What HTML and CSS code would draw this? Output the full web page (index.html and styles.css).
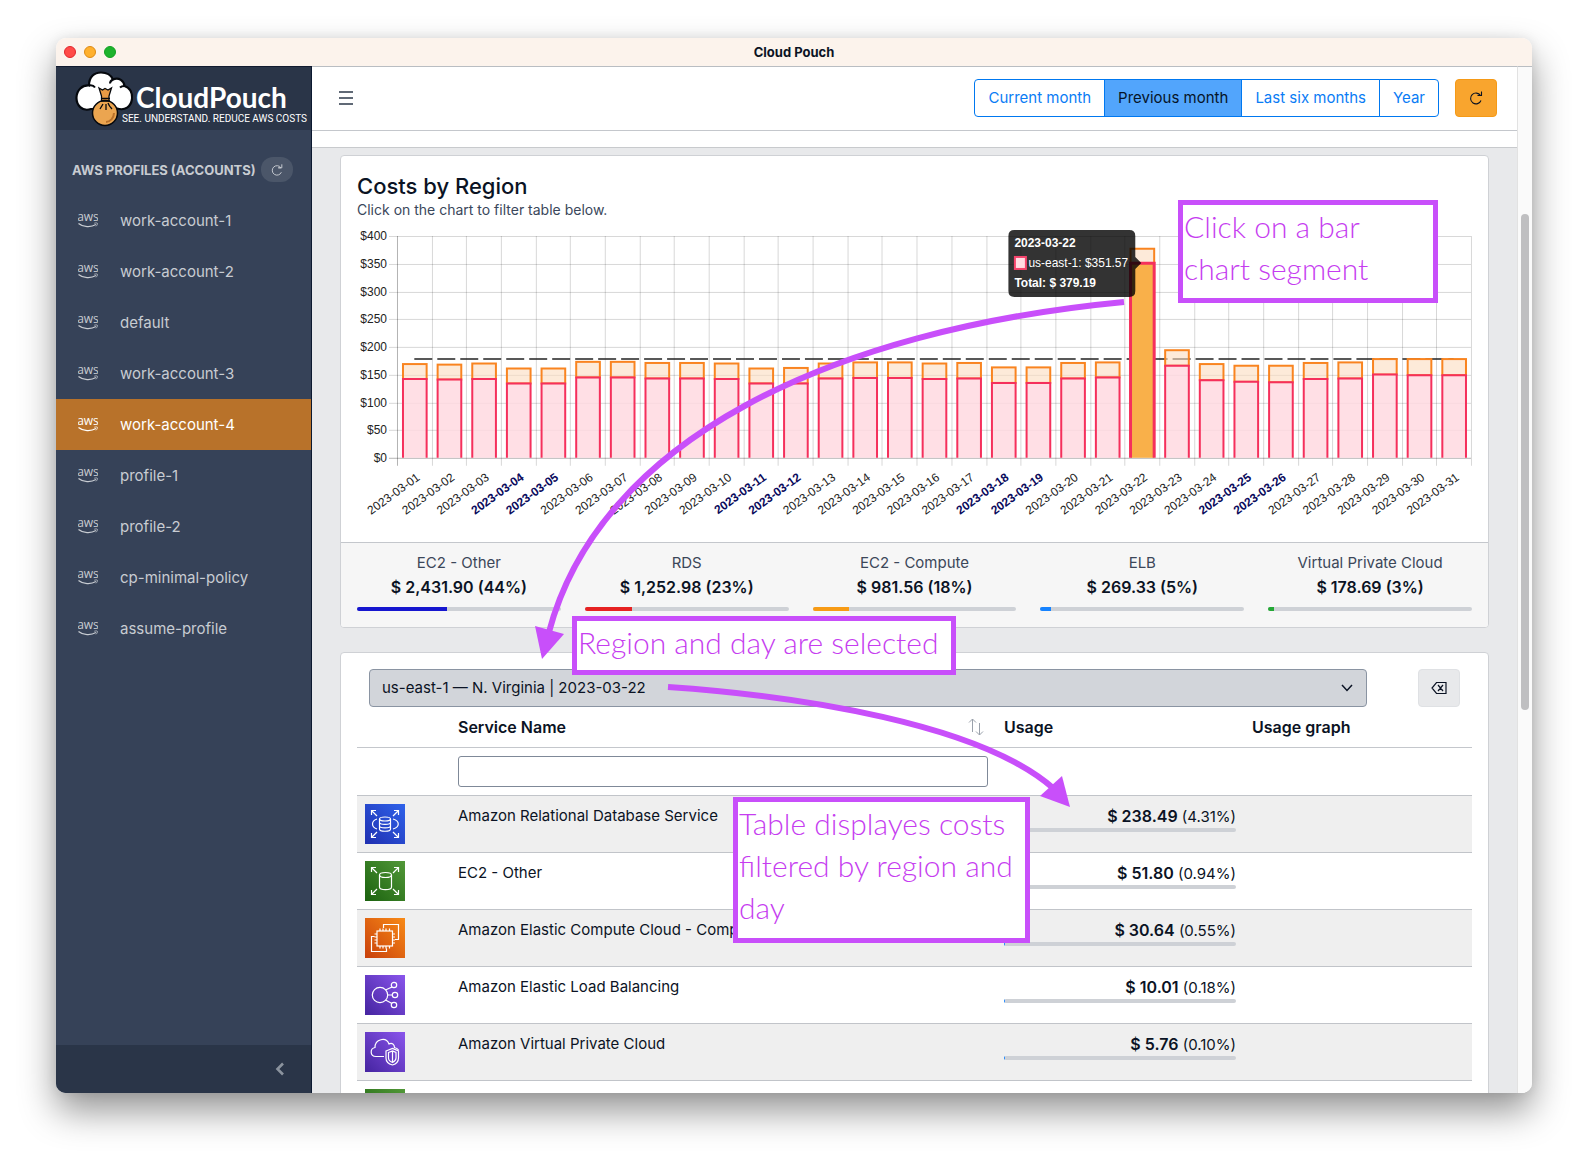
FILE: index.html
```html
<!DOCTYPE html>
<html lang="en">
<head>
<meta charset="utf-8">
<title>Cloud Pouch</title>
<meta name="viewport" content="width=device-width, initial-scale=1">
<link rel="stylesheet" href="styles.css">
</head>
<body>
<svg class="defs" aria-hidden="true">
  <defs>
    <symbol id="aws" viewBox="0 0 20 16">
      <text x="10" y="8" text-anchor="middle" class="aws-word">aws</text>
      <path d="M0.5 10.5C5 14.3 13 14.5 18 11.6" fill="none" stroke="currentColor" stroke-width="1.2"/>
      <path d="M16.3 10.2C18 9.8 19.2 9.8 19.4 10.3C19.6 11 19 12.400 18 13.300" fill="none" stroke="currentColor" stroke-width=".8"/>
    </symbol>
    <symbol id="reload" viewBox="0 0 16 16">
      <path d="M13 10.500A5.400 5.400 0 1 1 12.500 5.500H9.500M13.500 1.500V5.500H9.500" fill="none" stroke="currentColor" stroke-width="1.1"/>
    </symbol>
    <linearGradient id="blue" x1="0" y1="1" x2="1" y2="0"><stop offset="0" stop-color="#1f2fb0"/><stop offset="1" stop-color="#2f62ea"/></linearGradient>
    <linearGradient id="green" x1="0" y1="1" x2="1" y2="0"><stop offset="0" stop-color="#1b620f"/><stop offset="1" stop-color="#529838"/></linearGradient>
    <linearGradient id="orange" x1="0" y1="1" x2="1" y2="0"><stop offset="0" stop-color="#c8400c"/><stop offset="1" stop-color="#f88a16"/></linearGradient>
    <linearGradient id="purple" x1="0" y1="1" x2="1" y2="0"><stop offset="0" stop-color="#4524a0"/><stop offset="1" stop-color="#8a55ec"/></linearGradient>
    <symbol id="corners" viewBox="0 0 40 40">
      <path d="M6.500 11V6.500H11M6.500 6.500L12 12M29 6.500H33.500V11M33.500 6.500L28 12M6.500 29V33.500H11M6.500 33.500L12 28M29 33.500H33.500V29M33.500 33.500L28 28"/>
    </symbol>
  </defs>
</svg>
<div class="stage">
<div class="window">
  <header class="titlebar">
    <div class="lights"><span class="light red"></span><span class="light amber"></span><span class="light green"></span></div>
    <h1>Cloud Pouch</h1>
  </header>
  <div class="app">
    <aside class="sidebar">
      <div class="brand">
        <svg class="brand-mark" viewBox="0 0 58 56" aria-hidden="true">
          <path d="M16 38C7 41 1 34 1.500 26C2 19 7 14 14 14.500C14 6 19 1.500 26 1.500C32 1.500 36 4 38 8.500C44 6 49 10 49.500 15C55 17 57.500 22 57 28C56 36 50 40 42 37.500Z" fill="#fff" stroke="#05080d" stroke-width="2.200"/>
          <path d="M14 14.500C17 14 19 15 20 16.500M38 8.500C36 9.500 35 11 35 12.500M49.500 15C47.500 15 46 15.500 45 16.500" fill="none" stroke="#05080d" stroke-width="2"/>
          <path d="M24 17L27.500 19L30 17.500L33 19L36.500 17L34 25V31H26.500V25Z" fill="#e99b45" stroke="#05080d" stroke-width="1.300"/>
          <circle cx="30" cy="42" r="12.500" fill="#eba550" stroke="#05080d" stroke-width="1.500"/>
          <path d="M26 27.500H35M26 30H35M28 33L25 38M31 33V39M33 32C34 35 36 37 37 38" fill="none" stroke="#05080d" stroke-width="1.300"/>
          <path d="M39 42C39 47 35 51 31 51" fill="none" stroke="#b9712a" stroke-width="2"/>
        </svg>
        <div class="brand-text"><span class="brand-name">CloudPouch</span><span class="brand-tag">SEE. UNDERSTAND. REDUCE AWS COSTS</span></div>
      </div>
      <div class="nav-title"><h2>AWS PROFILES (ACCOUNTS)</h2><button class="pill" type="button" aria-label="Reload profiles"><svg><use href="#reload"/></svg></button></div>
      <nav class="nav">
        <a href="#"><svg><use href="#aws"/></svg>work-account-1</a>
        <a href="#"><svg><use href="#aws"/></svg>work-account-2</a>
        <a href="#"><svg><use href="#aws"/></svg>default</a>
        <a href="#"><svg><use href="#aws"/></svg>work-account-3</a>
        <a href="#" class="active"><svg><use href="#aws"/></svg>work-account-4</a>
        <a href="#"><svg><use href="#aws"/></svg>profile-1</a>
        <a href="#"><svg><use href="#aws"/></svg>profile-2</a>
        <a href="#"><svg><use href="#aws"/></svg>cp-minimal-policy</a>
        <a href="#"><svg><use href="#aws"/></svg>assume-profile</a>
      </nav>
      <button class="minimizer" type="button" aria-label="Collapse sidebar"><svg viewBox="0 0 10 14"><path d="M8 1.500L2.500 7L8 12.500" fill="none" stroke="currentColor" stroke-width="2.600"/></svg></button>
    </aside>
    <main class="main">
      <div class="topbar">
        <button class="toggler" type="button" aria-label="Toggle menu"><svg viewBox="0 0 14 14"><path d="M0 1H14M0 7H14M0 13H14" stroke="currentColor" stroke-width="1.300"/></svg></button>
        <div class="actions">
          <div class="group"><button type="button">Current month</button><button type="button" class="on">Previous month</button><button type="button">Last six months</button><button type="button">Year</button></div>
          <button class="refresh" type="button" aria-label="Refresh"><svg><use href="#reload"/></svg></button>
        </div>
      </div>
      <div class="subbar"></div>
      <div class="content">
        <section class="card">
          <div class="card-body chart-body">
            <h2 class="card-title">Costs by Region</h2>
            <p class="card-sub">Click on the chart to filter table below.</p>
            <svg class="chart" id="chart" viewBox="0 0 1116 300" role="img" aria-label="Daily costs by region"></svg>
          </div>
          <div class="summary">
            <div class="stat"><span>EC2 - Other</span><strong>$ 2,431.90 (44%)</strong><div class="bar"><i class="navy" style="width:44%"></i></div></div>
            <div class="stat"><span>RDS</span><strong>$ 1,252.98 (23%)</strong><div class="bar"><i class="crimson" style="width:23%"></i></div></div>
            <div class="stat"><span>EC2 - Compute</span><strong>$ 981.56 (18%)</strong><div class="bar"><i class="gold" style="width:18%"></i></div></div>
            <div class="stat"><span>ELB</span><strong>$ 269.33 (5%)</strong><div class="bar"><i class="azure" style="width:5%"></i></div></div>
            <div class="stat"><span>Virtual Private Cloud</span><strong>$ 178.69 (3%)</strong><div class="bar"><i class="leaf" style="width:3%"></i></div></div>
          </div>
        </section>
        <section class="card">
          <div class="card-body">
            <div class="filter">
              <div class="select"><select aria-label="Region and day"><option>us-east-1 — N. Virginia | 2023-03-22</option></select><svg viewBox="0 0 12 8"><path d="M1 1L6 6.500L11 1" fill="none" stroke="currentColor" stroke-width="1.500"/></svg></div>
              <button class="clear" type="button" aria-label="Clear filter"><svg viewBox="0 0 16 16"><path d="M5.500 2.500H15V13.500H5.500L1 8ZM7 5L12 11M12 5L7 11" fill="none" stroke="currentColor" stroke-width="1.200"/></svg></button>
            </div>
            <table>
              <colgroup><col class="c-icon"><col class="c-name"><col class="c-usage"><col class="c-graph"></colgroup>
              <thead>
                <tr><th></th><th><div class="sortable">Service Name<svg viewBox="0 0 16 18"><path d="M4.500 14V1M1 4.500L4.500 1L8 4.500M11.500 5V17M8 13.500L11.500 17L15 13.500" fill="none" stroke="currentColor"/></svg></div></th><th>Usage</th><th>Usage graph</th></tr>
                <tr class="search"><td></td><td><input type="text" aria-label="Filter by service name"></td><td></td><td></td></tr>
              </thead>
              <tbody>
                <tr><td><svg class="svc" viewBox="0 0 40 40"><rect width="40" height="40" fill="url(#blue)"/><g><use href="#corners"/><ellipse cx="20" cy="15" rx="5.500" ry="2"/><path d="M14.500 15V25C14.500 28 25.500 28 25.500 25V15M14.500 18.500C14.500 21 25.500 21 25.500 18.500M14.500 22C14.500 24.500 25.500 24.500 25.500 22M12 15C6 17 6 23 12 25M28 15C35 17 35 23 28 25"/></g></svg></td><td>Amazon Relational Database Service</td><td><div class="usage"><span><b>$ 238.49</b> (4.31%)</span><div class="bar"><i class="azure" style="width:4.31%"></i></div></div></td><td></td></tr>
                <tr><td><svg class="svc" viewBox="0 0 40 40"><rect width="40" height="40" fill="url(#green)"/><g><use href="#corners"/><ellipse cx="20.500" cy="14" rx="6" ry="2.500"/><path d="M14.500 14V26C14.500 29.500 26.500 29.500 26.500 26V14"/></g></svg></td><td>EC2 - Other</td><td><div class="usage"><span><b>$ 51.80</b> (0.94%)</span><div class="bar"><i class="azure" style="width:.94%"></i></div></div></td><td></td></tr>
                <tr><td><svg class="svc" viewBox="0 0 40 40"><rect width="40" height="40" fill="url(#orange)"/><g><rect x="12" y="13" width="15.500" height="15"/><path d="M15 10.500V13M18 10.500V13M21 10.500V13M24.500 10.500V13M15 28V30.500M18 28V30.500M21 28V30.500M24.500 28V30.500M9.500 16H12M9.500 19H12M9.500 22H12M9.500 25H12M27.500 16H30M27.500 19H30M27.500 22H30M27.500 25H30M18.500 10V6.500H33.500V21.500H30M9.500 18.500H6.500V33.500H21.500V30.500"/></g></svg></td><td>Amazon Elastic Compute Cloud - Compute</td><td><div class="usage"><span><b>$ 30.64</b> (0.55%)</span><div class="bar"><i class="azure" style="width:.55%"></i></div></div></td><td></td></tr>
                <tr><td><svg class="svc" viewBox="0 0 40 40"><rect width="40" height="40" fill="url(#purple)"/><g><circle cx="15" cy="20" r="7.700"/><circle cx="29" cy="10" r="2.700"/><circle cx="30" cy="20" r="2.700"/><circle cx="29" cy="30" r="2.700"/><path d="M20.500 15L27 12M22.700 20H27.300M20.500 25L27 28.500"/></g></svg></td><td>Amazon Elastic Load Balancing</td><td><div class="usage"><span><b>$ 10.01</b> (0.18%)</span><div class="bar"><i class="azure" style="width:.18%"></i></div></div></td><td></td></tr>
                <tr><td><svg class="svc" viewBox="0 0 40 40"><rect width="40" height="40" fill="url(#purple)"/><g><path d="M19 24.500H11C4.500 24 5 16.500 10 15.500C10 7 21 4.500 24 12C27 10.500 29.500 12.500 29.500 15.500C31.500 16 33 17 33.500 18"/><path d="M21 19L27.500 16.500L33.500 19V26C33.500 29.500 31 32 27.500 33C23.500 32 21 29.500 21 26ZM23.500 20.500L27.500 19L31 20.500V26C31 28 29.500 29.500 27.500 30.500C25 29.500 23.500 28 23.500 26ZM27.500 19V30"/></g></svg></td><td>Amazon Virtual Private Cloud</td><td><div class="usage"><span><b>$ 5.76</b> (0.10%)</span><div class="bar"><i class="azure" style="width:.1%"></i></div></div></td><td></td></tr>
                <tr><td><svg class="svc" viewBox="0 0 40 40"><rect width="40" height="40" fill="url(#green)"/></svg></td><td></td><td></td><td></td></tr>
              </tbody>
            </table>
          </div>
        </section>
      </div>
    </main>
    <div class="scroll"><div class="thumb"></div></div>
  </div>
</div>
<svg class="arrows" aria-hidden="true">
  <path class="stroke" d="M1124 302C830 330 600 440 549 632"/>
  <path class="head" d="M535 626L564 634L542 659Z"/>
  <path class="stroke" d="M668 687C800 696 980 724 1053 788"/>
  <path class="head" d="M1062 776L1070 807L1040 796Z"/>
</svg>
<p class="note note-bar">Click on a bar<br>chart segment</p>
<p class="note note-select">Region and day are selected</p>
<p class="note note-table">Table displayes costs<br>filtered by region and<br>day</p>
</div>
<script src="chart.js"></script>
</body>
</html>
```
FILE: styles.css
```css
* { box-sizing: border-box; }
body { margin: 0; background: #fff; color: #0b1324; font: 15px/24px Inter, "Liberation Sans", sans-serif; }
h1, h2, p { margin: 0; }
button, input, select { font: inherit; color: inherit; margin: 0; }
button { cursor: pointer; }
.defs { position: absolute; width: 0; height: 0; }
.stage { position: relative; height: 100vh; padding: 38px 56px 74px; overflow: hidden; }

.window { display: flex; flex-direction: column; height: 100%; overflow: hidden; border-radius: 10px; background: #fff; box-shadow: 0 18px 36px rgba(0,0,0,.42), 0 0 12px rgba(0,0,0,.08); }
.titlebar { flex: none; display: grid; grid-template-columns: 1fr auto 1fr; align-items: center; height: 28px; padding: 0 8px; background: #fcf3ec; }
.titlebar h1 { font-size: 13px; line-height: 16px; font-weight: 700; }
.lights { display: flex; gap: 8px; }
.light { width: 12px; height: 12px; border-radius: 50%; border: 1px solid; }
.red { background: #ff4b48; border-color: #e0262c; }
.amber { background: #ffb02e; border-color: #dd8a14; }
.light.green { background: #1db32d; border-color: #12a022; }
.app { flex: 1; display: flex; min-height: 0; }

.sidebar { flex: none; width: 256px; display: flex; flex-direction: column; background: #364258; color: #c8ccd2; border-right: 1px solid #0c1930; }
.brand { display: flex; flex: none; height: 64px; padding: 4px 0 0 19px; background: #2a3548; color: #fff; border-top: 1px solid #111b30; }
.brand-mark { flex: none; width: 58px; height: 56px; }
.brand-text { display: flex; flex-direction: column; padding-top: 10px; margin-left: -11px; white-space: nowrap; }
.brand-name { padding-left: 14px; font: 700 28px/32px Lato, sans-serif; }
.brand-tag { font: 10px/12px Roboto, sans-serif; }
.nav-title { display: flex; flex: none; align-items: center; gap: 5px; height: 65px; padding: 14px 16px 0; }
.nav-title h2 { font-size: 13px; line-height: 20px; font-weight: 700; white-space: nowrap; }
.pill { display: grid; place-items: center; width: 32px; height: 25px; padding: 0; border: 0; border-radius: 12px; background: #4b5669; }
.pill svg { width: 14px; height: 14px; }
.nav { display: flex; flex-direction: column; }
.nav a { display: flex; align-items: center; gap: 22px; height: 51px; padding: 0 22px; color: inherit; text-decoration: none; }
.nav svg { width: 20px; height: 16px; }
.aws-word { font: 12px "Open Sans", sans-serif; fill: currentColor; }
.nav .active { background: #b8722a; color: #fff; }
.minimizer { display: flex; align-items: center; justify-content: flex-end; height: 48px; margin-top: auto; padding: 0 26px; border: 0; background: #2a3548; color: #8b939e; }
.minimizer svg { width: 10px; height: 14px; }

.main { flex: 1; display: flex; flex-direction: column; min-width: 0; }
.topbar { flex: none; display: flex; align-items: center; justify-content: space-between; height: 65px; padding: 0 20px 2px 27px; border-top: 1px solid #b9bdc2; border-bottom: 1px solid #c4c7cc; }
.toggler { padding: 0; border: 0; background: none; color: #2c384a; display: flex; }
.toggler svg { width: 14px; height: 14px; }
.actions { display: flex; gap: 16px; }
.group { display: flex; }
.group button { height: 38px; padding: 0 13px; margin-left: -1px; border: 1px solid #0078f0; background: #fff; color: #0a7cf5; white-space: nowrap; }
.group button:first-child { margin-left: 0; border-radius: 4px 0 0 4px; }
.group button:last-child { border-radius: 0 4px 4px 0; }
.group .on { background: #52a5fc; color: #061428; }
.refresh, .clear { display: grid; place-items: center; width: 42px; height: 38px; padding: 0; border: 1px solid #f59a17; border-radius: 4px; background: #f9a52e; }
.refresh svg, .clear svg { width: 16px; height: 16px; }
.clear { background: #e8e9eb; border-color: #dfe1e4; }
.subbar { flex: none; height: 17px; border-bottom: 1px solid #c8cacd; }
.content { flex: 1; display: flex; flex-direction: column; gap: 24px; min-height: 0; padding: 7px 28px 0; background: #e8e9eb; overflow: hidden; }
.card { flex: none; border: 1px solid #cfd1d5; border-radius: 4px; background: #fff; overflow: hidden; }
.card-body { padding: 16px; }
.chart-body { padding-bottom: 0; height: 386px; }
.card-title { font-size: 22px; line-height: 28px; font-weight: 500; }
.card-sub { font-size: 14px; line-height: 20px; color: #3a475b; }
.chart { display: block; width: 100%; }
.chart text { font: 12px "Liberation Sans", sans-serif; fill: #222; }
.chart .weekend { font-weight: 700; fill: #0a0a5c; }
.chart .tip { fill: #fff; }
.chart .tip-bold { fill: #fff; font-weight: 700; }
.summary { display: grid; grid-template-columns: repeat(5, 1fr); gap: 24px; padding: 8px 16px 16px; border-top: 1px solid #c4c7cc; background: #f6f6f6; }
.stat { text-align: center; white-space: nowrap; }
.stat span { display: block; color: #3c4759; }
.stat strong { display: block; font-size: 16px; font-weight: 600; }
.stat .bar { margin-top: 8px; }
.bar { height: 4px; border-radius: 2px; background: #ced1d6; overflow: hidden; }
.bar i { display: block; height: 100%; }
.navy { background: #1616cf; }
.crimson { background: #e62222; }
.gold { background: #f79b15; }
.azure { background: #1683ff; }
.leaf { background: #24a835; }

.filter { display: flex; gap: 51px; padding: 0 12px; }
.select { display: flex; align-items: center; flex: 1; }
.select select { width: 100%; height: 38px; padding: 0 12px; appearance: none; border: 1px solid #8a94a2; border-radius: 4px; background: #d2d5da; }
.select svg { width: 12px; height: 8px; margin-left: -26px; margin-right: 14px; flex: none; pointer-events: none; }
table { width: 100%; table-layout: fixed; border-collapse: collapse; }
.c-icon { width: 93px; }
.c-usage { width: 248px; }
.c-graph { width: 228px; }
th { height: 40px; padding: 8px; text-align: left; font-size: 16px; font-weight: 600; border-bottom: 1px solid #c4c7cc; }
.sortable { display: flex; justify-content: space-between; align-items: center; padding-right: 4px; }
.sortable svg { width: 16px; height: 18px; color: #9aa1ab; }
td { height: 57px; padding: 8px; vertical-align: top; border-bottom: 1px solid #c1c4c9; }
.search td { height: 48px; }
.search input { display: block; width: 100%; height: 31px; padding: 0 8px; border: 1px solid #7f8998; border-radius: 3px; background: #fff; }
tbody tr:nth-child(odd) { background: #efefef; }
.svc { display: block; width: 40px; height: 40px; }
.svc g { fill: none; stroke: #fff; stroke-width: 1.200; }
.usage { text-align: right; }
.usage span { display: block; height: 24px; }
.usage b { font-size: 16px; font-weight: 600; }

.scroll { flex: none; width: 15px; padding: 147px 3px 0; border-left: 1px solid #e2e2e2; border-top: 1px solid #b9bdc2; background: #fafafa; }
.thumb { height: 496px; border-radius: 4px; background: #bfbfc1; }

.arrows { position: absolute; inset: 0; width: 100%; height: 100%; pointer-events: none; }
.stroke { fill: none; stroke: #c84ffa; stroke-width: 6px; }
.head { fill: #c84ffa; }
.note { position: absolute; border: 5px solid #c84ffa; background: #fff; color: #c63df0; padding: 0 1px; font: 300 30px/42px Papyrus, Lato, sans-serif; white-space: nowrap; }
.note-bar { left: 1178px; top: 200px; width: 260px; height: 103px; }
.note-select { left: 572px; top: 616px; width: 384px; height: 59px; }
.note-table { left: 733px; top: 797px; width: 297px; height: 146px; }
```
FILE: chart.js
```js
// Daily costs: [us-east-1, total]
const costs = [
  [142, 169], [141, 168], [142, 170], [134, 161], [134, 161], [145, 173], [145, 173],
  [143, 171], [143, 171], [142, 170], [134, 161], [134, 162], [143, 170], [144, 172],
  [144, 172], [142, 170], [143, 171], [135, 163], [135, 163], [143, 171], [145, 172],
  [351, 377], [166, 194], [140, 169], [137, 166], [136, 166], [142, 171], [143, 172],
  [150, 178], [149, 178], [149, 178]
];
const weekends = [4, 5, 11, 12, 18, 19, 25, 26];
const area = { left: 40, right: 1115, top: 16, bottom: 238 };
const step = (area.right - area.left) / costs.length;
const y = value => area.bottom - value * (area.bottom - area.top) / 400;
const out = [];

for (let v = 0; v <= 400; v += 50) {
  const gy = Math.round(y(v)) + 0.5;
  out.push(`<path d="M${area.left - 8} ${gy}H${area.right}" stroke="#000" stroke-opacity="${v ? 0.16 : 0.3}"/>`);
  out.push(`<text x="${area.left - 10}" y="${gy + 4}" text-anchor="end">$${v}</text>`);
}
for (let i = 0; i <= costs.length; i++) {
  const gx = Math.round(area.left + i * step) + 0.5;
  out.push(`<path d="M${gx} ${area.top}V${area.bottom + 8}" stroke="#000" stroke-opacity="${i ? 0.16 : 0.3}"/>`);
}
out.push(`<path d="M${area.left + step / 2} ${y(179) + 0.5}H${area.right - step / 2}" stroke="#222" stroke-width="1.6" stroke-dasharray="18 5"/>`);
costs.forEach(([main, total], i) => {
  const x = area.left + i * step + 6, w = step - 11, ym = y(main), yt = y(total);
  const selected = i === 21;
  out.push(`<rect x="${x}" y="${yt}" width="${w}" height="${ym - yt}" fill="#fcdcc0" fill-opacity=".6" stroke="#f98420" stroke-width="2"/>`);
  out.push(`<rect x="${x}" y="${ym}" width="${w}" height="${area.bottom - ym}" fill="${selected ? '#f9b04a' : '#ffd9e0'}" fill-opacity="${selected ? 1 : 0.85}"/>`);
  out.push(`<path d="M${x} ${area.bottom}V${ym}H${x + w}V${area.bottom}" fill="none" stroke="#f5305c" stroke-width="${selected ? 3 : 2}"/>`);
  const day = i + 1, lx = area.left + (i + 0.5) * step + 4;
  out.push(`<text class="${weekends.includes(day) ? 'weekend' : ''}" text-anchor="end" transform="translate(${lx} 256) rotate(-36)" y="4">2023-03-${String(day).padStart(2, '0')}</text>`);
});
out.push(`<g transform="translate(1 -1)"><path d="M657 11H772Q778 11 778 17V38L784 44L778 50V72Q778 78 772 78H657Q651 78 651 72V17Q651 11 657 11Z" fill="#000" fill-opacity=".8"/>
<text class="tip-bold" x="657" y="28">2023-03-22</text>
<rect x="657.5" y="38" width="11" height="12" fill="#ffdce3" stroke="#f5446c" stroke-width="2"/>
<text class="tip" x="671" y="48">us-east-1: $351.57</text>
<text class="tip-bold" x="657" y="68">Total: $ 379.19</text></g>`);
document.getElementById('chart').innerHTML = out.join('');
```
